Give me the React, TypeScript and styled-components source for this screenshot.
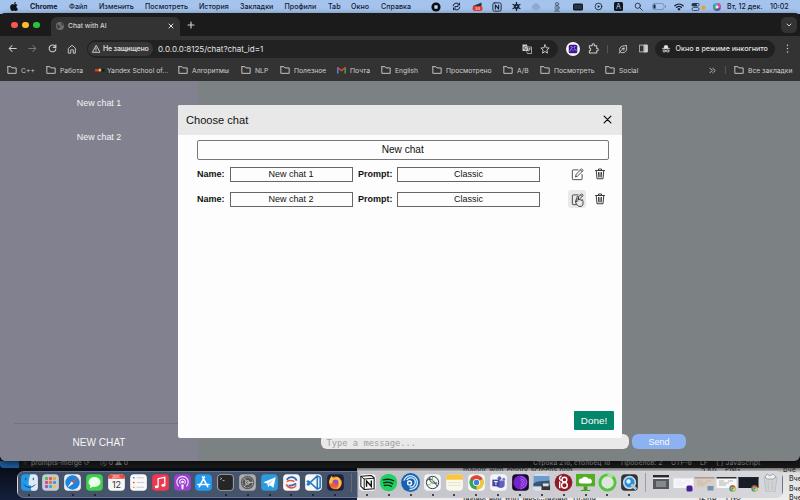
import React from 'react';
import styled, { createGlobalStyle } from 'styled-components';

const Global = createGlobalStyle`
  html, body { margin: 0; width: 800px; height: 500px; overflow: hidden; background: #10182c; }
  *, *::before, *::after { box-sizing: border-box; }
  button, input { font: inherit; padding: 0; margin: 0; }
  svg { display: block; flex: none; }
`;

/* ---------- desktop ---------- */
const Desktop = styled.div`
  position: relative;
  width: 800px;
  height: 500px;
  overflow: hidden;
  background: #10182c;
  font-family: Inter, "Liberation Sans", sans-serif;
`;
const MenuBar = styled.header`
  display: flex;
  align-items: center;
  height: 14px;
  padding: 0 10px 1px;
  background: #a4c3ed;
  color: #15202f;
  font-size: 7.1px;
`;
const Slot = styled.span<{ $w: number; $bold?: boolean }>`
  flex: none;
  width: ${p => p.$w}px;
  white-space: nowrap;
  font-weight: ${p => (p.$bold ? 700 : 500)};
`;
const IconSlot = styled.span<{ $w: number }>`
  flex: none;
  display: flex;
  justify-content: center;
  width: ${p => p.$w}px;
`;

/* ---------- browser chrome ---------- */
const Browser = styled.main`
  position: relative;
  z-index: 2;
  height: 448px;
  margin-top: -1px;
  display: flex;
  flex-direction: column;
  overflow: hidden;
  border-radius: 5px 5px 6px 6px;
  background: #1b1b1b;
  color: #d6d6d6;
  box-shadow: 0 2px 6px rgba(0, 0, 0, 0.6);
`;
const TabStrip = styled.div`
  display: flex;
  align-items: flex-end;
  height: 23px;
  padding: 0 3px 0 11px;
`;
const Lights = styled.div`
  display: flex;
  gap: 4.4px;
  width: 40px;
  height: 14.5px;
`;
const Light = styled.i<{ $c: string }>`
  width: 6.8px;
  height: 6.8px;
  border-radius: 50%;
  background: ${p => p.$c};
`;
const Tab = styled.div`
  display: flex;
  align-items: center;
  width: 129px;
  height: 19px;
  padding: 0 6px 2px 5px;
  border-radius: 6px 6px 0 0;
  background: #333;
  font-size: 6.7px;
  font-weight: 500;
`;
const TabTitle = styled.span`
  flex: 1;
  padding-left: 4px;
  white-space: nowrap;
`;
const PlusWrap = styled.div`
  padding: 0 0 7.5px 7px;
`;
const TabSearch = styled.button`
  display: flex;
  align-items: center;
  justify-content: center;
  width: 16px;
  height: 16px;
  margin: 0 0 3px auto;
  border: 0;
  border-radius: 5px;
  background: #333;
`;
const Toolbar = styled.div`
  display: flex;
  align-items: center;
  height: 25px;
  padding-left: 2px;
  background: #333;
`;
const Omnibox = styled.div`
  display: flex;
  align-items: center;
  width: 471px;
  height: 18px;
  margin-left: 5px;
  padding: 0 4px 0 1px;
  border-radius: 9px;
  background: #222;
`;
const Chip = styled.span`
  display: flex;
  align-items: center;
  gap: 3px;
  width: 65px;
  height: 14px;
  padding-left: 4px;
  border-radius: 7px;
  background: #363636;
  font-size: 7px;
  font-weight: 600;
  letter-spacing: -0.2px;
  white-space: nowrap;
`;
const Url = styled.span`
  flex: 1;
  padding-left: 5px;
  font-size: 8px;
  color: #e2e2e2;
`;
const Incognito = styled.div`
  display: flex;
  align-items: center;
  gap: 5.5px;
  width: 120px;
  height: 18px;
  margin-left: 2px;
  padding-left: 7px;
  border-radius: 9px;
  background: #212121;
  font-size: 7.15px;
  font-weight: 500;
  white-space: nowrap;
  color: #e0e0e0;
`;
const Divider = styled.i<{ $m: string }>`
  width: 1px;
  height: 8px;
  margin: ${p => p.$m};
  background: #555;
`;
const Bookmarks = styled.div`
  display: flex;
  align-items: center;
  height: 20px;
  padding: 0 0 2px 7px;
  background: #333;
  font-size: 6.75px;
  color: #cdcdcd;
`;
const Bookmark = styled.div<{ $w: number; $gap?: number }>`
  display: flex;
  align-items: center;
  gap: ${p => p.$gap ?? 4}px;
  flex: none;
  width: ${p => p.$w}px;
  white-space: nowrap;
`;

/* ---------- chat page ---------- */
const Page = styled.section`
  position: relative;
  display: flex;
  flex: 1;
  background: #7c8183;
  font-family: "Liberation Sans", Arial, sans-serif;
`;
const Sidebar = styled.aside`
  display: flex;
  flex-direction: column;
  align-items: center;
  width: 198px;
  padding-top: 5px;
  background: #81818f;
  color: #f4f4f6;
  font-size: 8.9px;
`;
const ChatLink = styled.div`
  height: 34px;
  line-height: 34px;
`;
const NewChatLink = styled.div`
  width: 170px;
  height: 38px;
  margin-top: auto;
  border-top: 1px solid #74747f;
  font-size: 10.1px;
  line-height: 37px;
  text-align: center;
`;
const ChatMain = styled.div`
  display: flex;
  flex: 1;
  align-items: flex-end;
  gap: 3px;
  padding: 0 0 12px 123px;
`;
const Message = styled.div`
  width: 308px;
  height: 15px;
  padding-left: 5.5px;
  border-radius: 6px;
  background: #e9e9e9;
  color: #a0a0a0;
  font: 8.75px/18px "DejaVu Sans Mono", monospace;
`;
const Send = styled.button`
  width: 54px;
  height: 15px;
  border: 0;
  border-radius: 6px;
  background: #8cb2f1;
  color: #f6f9ff;
  font-size: 9.1px;
`;
const Modal = styled.div`
  position: absolute;
  left: 178px;
  top: 23.5px;
  width: 444px;
  height: 333px;
  display: flex;
  flex-direction: column;
  overflow: hidden;
  border-radius: 2px;
  background: #fdfdfd;
  color: #111;
`;
const ModalHead = styled.div`
  display: flex;
  align-items: center;
  justify-content: space-between;
  height: 30px;
  padding: 0 10.5px 0 8px;
  background: #e8e8e8;
  font-size: 11.1px;
`;
const ModalBody = styled.div`
  display: flex;
  flex: 1;
  flex-direction: column;
  padding: 5.5px 8px 8px 19px;
`;
const NewChat = styled.button`
  width: 411.5px;
  height: 19.5px;
  margin-bottom: 2.5px;
  border: 1px solid #777;
  border-radius: 2px;
  background: #fdfdfd;
  color: #111;
  font-size: 10.1px;
  line-height: 17px;
`;
const ChatRow = styled.div`
  display: flex;
  align-items: center;
  height: 25px;
  font-size: 9px;
`;
const Label = styled.b<{ $w: number }>`
  width: ${p => p.$w}px;
  line-height: 13px;
`;
const Field = styled.div<{ $w: number; $mr: number }>`
  width: ${p => p.$w}px;
  height: 15px;
  margin-right: ${p => p.$mr}px;
  border: 1px solid #666;
  line-height: 13px;
  text-align: center;
`;
const Action = styled.button<{ $hover?: boolean }>`
  display: flex;
  align-items: center;
  justify-content: center;
  width: 18px;
  height: 18px;
  margin: 0 5px 1px 0;
  border: 0;
  border-radius: 3px;
  background: ${p => (p.$hover ? '#e9e9e9' : 'transparent')};
`;
const Done = styled.button`
  align-self: flex-end;
  width: 40px;
  height: 18.5px;
  margin-top: auto;
  border: 0;
  border-radius: 1px;
  background: #04866a;
  color: #fff;
  font-size: 9.9px;
`;

/* ---------- windows behind and dock ---------- */
const StatusBar = styled.div`
  display: flex;
  position: relative;
  z-index: 1;
  height: 7px;
  overflow: hidden;
  background: #191919;
  color: #8a8a8a;
  font-size: 6.8px;
  line-height: 3px;
`;
const Remote = styled.i`
  width: 19px;
  height: 7px;
  margin-right: 4px;
  border-radius: 0 0 0 4px;
  background: #1d5c9d;
`;
const Backdrop = styled.div`
  display: flex;
  height: 32px;
  background: linear-gradient(#080d19, #14203c);
`;
const Finder = styled.div`
  display: flex;
  flex-direction: column;
  justify-content: space-between;
  width: 443px;
  height: 32px;
  margin-left: 357px;
  overflow: hidden;
  background: linear-gradient(#777, #dedede 5px, #ededed);
  color: #333;
  font-size: 7px;
  line-height: 4px;
`;
const FinderRow = styled.div<{ $pl: number }>`
  display: flex;
  height: 4px;
  padding-left: ${p => p.$pl}px;
  white-space: nowrap;
`;
const Dock = styled.nav`
  position: absolute;
  z-index: 3;
  left: 17px;
  top: 470.5px;
  width: 766px;
  height: 27px;
  display: flex;
  padding: 1.7px 0 0 0.2px;
  border: 1px solid rgba(215, 220, 235, 0.25);
  border-radius: 7px;
  background: linear-gradient(90deg, #46546b 0 339px, #c2c3c9 340px, #d8d8dc);
`;
const DockItem = styled.div<{ $run?: boolean }>`
  display: flex;
  flex: none;
  flex-direction: column;
  align-items: center;
  width: 21.87px;
  &::after {
    content: '';
    display: ${p => (p.$run ? 'block' : 'none')};
    width: 2px;
    height: 2px;
    margin-top: 1.8px;
    border-radius: 50%;
    background: #17191e;
  }
`;
const DockDivider = styled.i`
  width: 1px;
  height: 19px;
  margin: 0 4.5px;
  background: rgba(120, 125, 135, 0.6);
`;

type IconProps = { s?: number; c?: string; children: React.ReactNode };
const Line = ({ s = 10, c = '#cfcfcf', children }: IconProps) => (
  <svg width={s} height={s} viewBox="0 0 24 24" fill="none" stroke={c} strokeWidth="2.2" strokeLinejoin="round" strokeLinecap="round">
    {children}
  </svg>
);
const Folder = () => (
  <Line><path d="M2 5v15h20V7H12L9.500 4H2z" /></Line>
);
const Tile = ({ bg, children }: { bg: string; children?: React.ReactNode }) => (
  <svg width="19" height="19" viewBox="0 0 20 20">
    <rect x="1.2" y="1.2" width="17.6" height="17.6" rx="4" fill={bg} />
    {children}
  </svg>
);

const Pencil = () => (
  <Line s={13} c="#333"><path d="M13 3.500H4A1.500 1.500 0 0 0 2.500 5v15A1.500 1.500 0 0 0 4 21.500h15a1.500 1.500 0 0 0 1.500-1.500v-8" strokeWidth="1.600" /><path d="M8.500 16l1-4.500L19.500 1.500l3 3-10 10zM17.500 3.500l3 3" strokeWidth="1.600" /></Line>
);
const Trash = () => (
  <Line s={12} c="#333"><path d="M3 5h18M9 5V2h6v3M4.500 5.500L6 21.500h12l1.500-16M9 9l.5 9M12 9v9M15 9l-.5 9" strokeWidth="1.900" /></Line>
);
const Hand = styled.svg`
  position: absolute;
  left: 573.5px;
  top: 114px;
`;

const dockLeft: [React.ReactNode, boolean][] = [
  [<Tile bg="#2499ec"><path d="M11 1.200h4c2.500 0 3.800 1.500 3.800 4v10c0 2.500-1.500 3.600-3.800 3.600h-3c-.6-2-.7-4-.7-6H9c0-5 .8-8.500 2-11.600z" fill="#dfeaf4" /><path d="M6 5v2.500M14 5v2.500M4 12c3 4 9 4 12 0" stroke="#183b66" fill="none" /></Tile>, true],
  [<Tile bg="#c6cbd3">{['#52bd52', '#e65c50', '#eda338', '#e04878', '#ed713b', '#4c93ed', '#9b58cc', '#38b3ce', '#ebc64d'].map((c, i) => <rect key={i} x={4.2 + (i % 3) * 4.2} y={4.2 + Math.floor(i / 3) * 4.2} width="3.300" height="3.300" rx=".8" fill={c} />)}</Tile>, false],
  [<Tile bg="#e9edf1"><circle cx="10" cy="10" r="7.600" fill="#1c85e0" /><path d="M15.500 4.500L11 11 9 9z" fill="#f04e42" /><path d="M4.500 15.500L11 11 9 9z" fill="#fff" /></Tile>, true],
  [<Tile bg="#3fce4e"><ellipse cx="10" cy="9.500" rx="6.300" ry="5.300" fill="#e8ffe9" /><path d="M6 12l-1 4 4-2z" fill="#e8ffe9" /></Tile>, true],
  [<Tile bg="#f7f7f7"><path d="M1.200 6V5c0-2.500 1.300-3.800 4-3.800h9.600c2.700 0 4 1.300 4 3.800v1z" fill="#e8483e" /><text x="10" y="5.200" textAnchor="middle" fontSize="3.800" fill="#fff">ДЕК.</text><text x="10" y="15.300" textAnchor="middle" fontSize="9.500" fill="#333">12</text></Tile>, false],
  [<Tile bg="#f8f8f8"><g strokeWidth="1.800" strokeLinecap="round"><path d="M5 5h.1" stroke="#3b82e8" /><path d="M5 10h.1" stroke="#e64d3e" /><path d="M5 15h.1" stroke="#f09d2e" /></g><path d="M8 5h8M8 10h8M8 15h8" stroke="#c9c9c9" /></Tile>, false],
  [<Tile bg="#ed3850"><path d="M7.500 14.500V6l7-1.500v8.500" stroke="#fff" strokeWidth="1.400" fill="none" /><ellipse cx="6" cy="14.500" rx="2" ry="1.600" fill="#fff" /><ellipse cx="13" cy="13" rx="2" ry="1.600" fill="#fff" /></Tile>, false],
  [<Tile bg="#9a41ce"><g fill="none" stroke="#f5e3ff" strokeWidth="1.200"><path d="M6 14a6 6 0 1 1 8 0M8 11.500a3 3 0 1 1 4 0" /></g><circle cx="10" cy="9.500" r="1.400" fill="#fff" /><path d="M8.700 12h2.600l-.5 5H9.200z" fill="#fff" /></Tile>, false],
  [<Tile bg="#239aef"><path d="M11 4L5.500 14.500M9 4l5.500 10.500M4 12h12" stroke="#fff" strokeWidth="1.600" strokeLinecap="round" /></Tile>, false],
  [<Tile bg="#a8a8a8"><rect x="2.200" y="2.200" width="15.600" height="15.600" rx="3" fill="#262626" /><path d="M4.500 5l1.500 1-1.500 1M7 8h2" stroke="#ddd" strokeWidth=".8" fill="none" /></Tile>, true],
  [<Tile bg="#aaacaf"><circle cx="10" cy="10" r="7" fill="#555" /><circle cx="10" cy="10" r="5.500" fill="none" stroke="#bbb" strokeWidth="1" strokeDasharray="1 .7" /><circle cx="10" cy="10" r="2" fill="none" stroke="#ccc" /><path d="M10 10L6 5M10 10h6M10 10l-4 5" stroke="#bbb" /></Tile>, true],
  [<Tile bg="#2b9ade"><path d="M3.500 9.800L16.500 4.500l-2.300 11-4-2.700-1.700 2.200-.8-3.800z" fill="#fff" /><path d="M8 11l6-4.500-4.200 6" fill="#b3dcf3" /></Tile>, true],
  [<Tile bg="#f6f6f7"><path d="M15.500 8A6 6 0 0 0 5 7M7 13c4 1 6-1 8-2" fill="none" stroke="#2d65ba" strokeWidth="1.900" /><path d="M4.500 12A6 6 0 0 0 15 13M5 9c3-2 6-1 8 0" fill="none" stroke="#e4573e" strokeWidth="1.700" /></Tile>, true],
  [<Tile bg="#f7f7f8"><path d="M14 3L6.500 10 4.500 8.500 3.500 9l1.500 1.500M14 17L6.500 10M5 10.500L3.500 12l1 .6 2-1.600M14 3v14l3-1.500v-11z" stroke="#2379c2" strokeWidth="1.700" fill="none" strokeLinejoin="round" /></Tile>, true],
  [<Tile bg="#21203c"><circle cx="10" cy="10.500" r="6.700" fill="#f77b2d" /><path d="M3.500 11C3 7 5 5 6 3l2 3 4-2 3 3c2 3 1 8-4 10 3-3 3-6 0-7-3 0-4 1-7.500 1z" fill="#ffc13b" /><circle cx="10" cy="10" r="3.200" fill="#9452c0" /><path d="M4 11c2 1 3 1 5-2 0 3 2 4 4 3-1 5-8 4-9-1z" fill="#f05b38" /></Tile>, true],
];

const dockRight: React.ReactNode[] = [
  <Tile bg="#fafafa"><path d="M3 3.500l11-.8 3 2.300v11.500l-10.500.8L3 14z" fill="#fff" stroke="#111" strokeWidth="1.100" /><path d="M3 3.500l3.500 2.800v11M6.500 6.300L17 5.500" stroke="#111" strokeWidth="1" fill="none" /><path d="M9 14.500V8.500l5 5.500V8" stroke="#111" strokeWidth="1.500" fill="none" /></Tile>,
  <svg width="19" height="19" viewBox="0 0 20 20"><circle cx="10" cy="10" r="9.200" fill="#1fd160" /><path d="M4.500 7.200c4-1 8-.6 11 1M5 10.300c3.500-.9 6.700-.5 9.300.9M5.600 13.100c2.800-.6 5.300-.3 7.500.9" stroke="#112618" strokeWidth="1.500" strokeLinecap="round" fill="none" /></svg>,
  <svg width="19" height="19" viewBox="0 0 20 20"><circle cx="10" cy="10" r="9.900" fill="#1762b0" /><path d="M3 8A7.300 7.300 0 1 1 9 17.300M6 7.500a4.800 4.800 0 1 1 3 7" stroke="#cbe6fa" strokeWidth="1.500" fill="none" /><circle cx="9" cy="10.500" r="2" fill="none" stroke="#fff" strokeWidth="1.500" /></svg>,
  <Tile bg="#f4f5f5"><g fill="none" stroke="#27394a" strokeWidth="1"><circle cx="10" cy="10" r="6.500" /><path d="M4 8c5-4 7 0 11 6M7 4.500c0 5 2 7 8 6" /><path d="M4 12c4 2 6-2 6-8" stroke="#7cb454" /></g></Tile>,
  <Tile bg="#fbf7e9"><path d="M1.200 7V5c0-2.500 1.500-3.800 4-3.800h9.600c2.500 0 4 1.300 4 3.800v2z" fill="#f6c644" /><path d="M3 10h14M3 13h14" stroke="#ddd8c8" strokeWidth=".7" /></Tile>,
  <Tile bg="#f7f7f7"><circle cx="10" cy="10" r="7.500" fill="#38a453" /><path d="M10 10L3.500 6.200A7.500 7.500 0 0 1 16.500 6.200z" fill="#e24635" /><path d="M10 10l6.500-3.800A7.500 7.500 0 0 1 10 17.500z" fill="#f5c735" /><circle cx="10" cy="10" r="3.700" fill="#fff" /><circle cx="10" cy="10" r="2.800" fill="#3781e8" /></Tile>,
  <Tile bg="#f5f5f9"><circle cx="11" cy="5.500" r="2" fill="#6264b5" /><circle cx="15.500" cy="6.500" r="1.400" fill="#7779c4" /><path d="M8 8h8.500v5c0 3-6 4-8.500 1z" fill="#6163bb" /><rect x="3.500" y="7" width="7.500" height="7" fill="#4548a2" /><path d="M5.300 9h4M7.300 9v3.500" stroke="#fff" /></Tile>,
  <Tile bg="#180b27"><circle cx="10" cy="10" r="7.500" fill="#7423c9" /><g fill="none" stroke="#c07af8" strokeWidth=".8"><path d="M10 3.800a6.200 6.200 0 0 1 0 12.400M10 6a4 4 0 0 1 0 8M10 8a2 2 0 0 1 0 4" /></g></Tile>,
  <Tile bg="#dbe4ec"><rect x="1.500" y="3" width="17" height="11" fill="#6f9cd0" /><path d="M1.500 11c5-3 9-2 17-3v6h-17z" fill="#39556f" /><path d="M10 13h9v5h-9z" fill="#343437" /><path d="M11.500 11h6v3h-6z" fill="#ddd" /></Tile>,
  <svg width="19" height="19" viewBox="0 0 20 20"><circle cx="10" cy="10" r="9.300" fill="#921923" /><g fill="none" stroke="#fff" strokeWidth="1.500"><circle cx="11" cy="7" r="2.500" /><circle cx="11" cy="13" r="3" /><path d="M8 3c-3 1-3 4 0 5M6 9v7" /></g></svg>,
  <svg width="19" height="19" viewBox="0 0 20 20"><path d="M0 1h20v13H0z" fill="#52ad25" /><path d="M8 14h4v4h3v1H5v-1h3z" fill="#479b20" /><path d="M5 11a2.500 2.500 0 0 1 1-5 4 4 0 0 1 7 0 2.500 2.500 0 0 1 2 5z" fill="#fff" /></svg>,
  <svg width="19" height="19" viewBox="0 0 20 20"><circle cx="10" cy="10" r="8" fill="#dfe5dd" stroke="#54c63d" strokeWidth="3" /><path d="M10 2a8 8 0 0 1 5.500 2.200" stroke="#a2e690" strokeWidth="3" fill="none" /></svg>,
  <Tile bg="#2e343c"><circle cx="10" cy="10" r="7" fill="#cbd5dc" /><circle cx="10" cy="10" r="5.200" fill="#238fdd" /><circle cx="9" cy="9" r="2.300" fill="#dff5fd" /><path d="M12 12l5 5" stroke="#b8c8d1" strokeWidth="3" /></Tile>,
];

const Thumb = ({ bg, bar, children }: { bg: string; bar: string; children?: React.ReactNode }) => (
  <svg width="21" height="19" viewBox="0 0 21 19">
    <rect x=".5" y="4" width="20" height="11" fill={bg} /><rect x=".5" y="4" width="20" height="1.500" fill={bar} />
    <path d="M3 8h5M3 10h10M12 8h5M3 12h7" stroke={bar} strokeWidth=".6" opacity=".6" />
    {children}
  </svg>
);
const ChromeBadge = () => (
  <g><circle cx="16.500" cy="15.500" r="3.200" fill="#3aa655" /><path d="M16.500 15.500l-2.800-1.600a3.200 3.200 0 0 1 5.600 0z" fill="#e24635" /><path d="M16.500 15.500l2.800-1.600a3.200 3.200 0 0 1-2.800 4.800z" fill="#f5c735" /><circle cx="16.500" cy="15.500" r="1.300" fill="#3781e8" stroke="#fff" strokeWidth=".4" /></g>
);
const dockWindows: React.ReactNode[] = [
  <svg width="16" height="19" viewBox="0 0 16 19"><path d="M0 2h16v14H0z" fill="#55585c" /><path d="M0 2h16v2.500H0z" fill="#292a2c" /><path d="M0 4.500h16v1.500H0z" fill="#f2f2f2" /><path d="M3 8h10v6H3z" fill="#85898d" /></svg>,
  <Thumb bg="#f7f7fb" bar="#d5d6df"><rect x="13.500" y="12.500" width="6" height="6" rx="1.500" fill="#4b1c96" /></Thumb>,
  <Thumb bg="#d9cec0" bar="#ad9991"><rect x="13.500" y="13" width="6" height="4.500" fill="#6e90b8" /></Thumb>,
  <Thumb bg="#f8f8f8" bar="#333"><ChromeBadge /></Thumb>,
  <Thumb bg="#171b26" bar="#1d2533"><ChromeBadge /></Thumb>,
  <svg width="15" height="19" viewBox="0 0 15 19"><path d="M1 4h13l-2 15H3z" fill="#d0d3d6" stroke="#b1b5ba" strokeWidth=".7" /><path d="M2 4l2-3 3 2 3-2 3 3-3 2H4z" fill="#f0f1f2" stroke="#878b91" strokeWidth=".7" /><path d="M5 8l.5 9M9.500 8L9 17" stroke="#b7bbc0" strokeWidth=".6" /></svg>,
];

const menus: [string, number][] = [
  ['Файл', 30], ['Изменить', 46], ['Посмотреть', 54], ['История', 41], ['Закладки', 44.5],
  ['Профили', 43.5], ['Tab', 23], ['Окно', 30], ['Справка', 44],
];
const trayColor = '#182333';
const tray: [number, React.ReactNode][] = [
  [21, <Line s={10} c="#0b0f14"><circle cx="12" cy="12" r="11" fill="#0b0f14" stroke="none" /><rect x="8" y="8" width="8" height="8" rx="1" fill="#c0d4ef" stroke="none" /></Line>],
  [21, <Line s={9} c={trayColor}><path d="M3 10a9 9 0 0 1 17-2M21 14a9 9 0 0 1-17 2M8 12h8M20 3v5h-5M4 21v-5h5" strokeWidth="2.600" /></Line>],
  [20, <svg width="11" height="9" viewBox="0 0 22 18"><path d="M2 8L19 1v14L2 12z" fill="#26344a" /><rect x="1" y="8" width="20" height="10" rx="5" fill="#e53835" /><text x="11" y="16" fontSize="8" fill="#fff" textAnchor="middle">34</text></svg>],
  [19, <Line s={10} c={trayColor}><rect x="2" y="2" width="20" height="20" rx="4" /><path d="M8 17V7l8 10V7" strokeWidth="2.600" /></Line>],
  [20, <Line s={9} c={trayColor}><path d="M12 1v22M3 6.500l18 11M21 6.500L3 17.500" strokeWidth="3.500" /><circle cx="12" cy="12" r="6" fill={trayColor} /><circle cx="12" cy="12" r="2" fill="#a4c3ed" stroke="none" /></Line>],
  [20, <Line s={8} c="#7188a8"><path d="M4 19a10 10 0 1 1 16 0M8 16a5 5 0 1 1 8 0M12 12v9" /></Line>],
  [21, <Line s={10} c="#50627b"><circle cx="12" cy="5" r="4" /><circle cx="12" cy="14" r="5" /><path d="M6 22h12M12 5v15" /></Line>],
  [21, <svg width="10" height="8" viewBox="0 0 20 16"><rect y="1" width="20" height="14" rx="3" fill="#111923" /><path d="M4 4v8M8 4v8M12 4v8M16 4v8" stroke="#5d708c" strokeWidth="1.300" /></svg>],
  [20, <Line s={9} c={trayColor}><circle cx="12" cy="12" r="9" /><path d="M10 8l6 4-6 4z" fill={trayColor} stroke="none" /></Line>],
  [20, <svg width="9" height="9" viewBox="0 0 18 18"><rect width="18" height="18" rx="3" fill="#111820" /><text x="9" y="14" fontSize="14" fill="#c0d4ef" textAnchor="middle">A</text></svg>],
  [20, <Line s={9} c={trayColor}><circle cx="10" cy="10" r="7" /><path d="M15 15l7 7" /></Line>],
  [21, <svg width="14" height="7" viewBox="0 0 28 14"><rect x="1" y="1" width="23" height="12" rx="4" fill="none" stroke="#6d83a3" strokeWidth="1.500" /><rect x="3" y="3" width="4" height="8" rx="1" fill="#142133" /><path d="M27 5v4" stroke="#6d83a3" strokeWidth="2" /></svg>],
  [20, <Line s={10} c={trayColor}><path d="M2 9a15 15 0 0 1 20 0M6 13a9 9 0 0 1 12 0M10 17a3 3 0 0 1 4 0l-2 2z" strokeWidth="3" /></Line>],
  [18, <svg width="15" height="8" viewBox="0 0 30 16"><rect x="1" y="0" width="16" height="7" rx="3.500" fill="#26364c" /><circle cx="13.500" cy="3.500" r="2" fill="#c0d4ef" /><rect x="2" y="9" width="14" height="6" rx="3" fill="none" stroke="#26364c" strokeWidth="1.500" /><circle cx="25" cy="9" r="4" fill="#f59a23" /></svg>],
  [20, <svg width="8" height="8" viewBox="0 0 16 16"><circle cx="8" cy="8" r="8" fill="#5c54b6" /><path d="M8 8L1 4a8 8 0 0 1 9-4z" fill="#3fb6db" /><path d="M8 8l2-8a8 8 0 0 1 5 11z" fill="#e45375" /><path d="M8 8l-4 7a8 8 0 0 1-3-10z" fill="#39ae76" /><circle cx="8" cy="8" r="3" fill="#f3eafa" /></svg>],
];

const Yandex = () => <svg width="10" height="8" viewBox="0 0 20 16"><path d="M0 6h9v5H0z" fill="#d63b2f" /><circle cx="10" cy="8" r="3" fill="#f7c23b" /><path d="M13 6h6v5h-6z" fill="#181818" /></svg>;
const Gmail = () => <svg width="9" height="8" viewBox="0 0 18 14"><path d="M1.500 14V2" stroke="#4285f4" strokeWidth="3" /><path d="M16.500 14V2" stroke="#34a853" strokeWidth="3" /><path d="M1 2l8 6 8-6" stroke="#ea4335" strokeWidth="3" fill="none" /></svg>;

const bookmarks: [string, number, React.ReactNode?, number?][] = [
  ['C++', 39], ['Работа', 49], ['Yandex School of...', 83, <Yandex />, 2], ['Алгоритмы', 63], ['NLP', 39],
  ['Полезное', 57], ['Почта', 44, <Gmail />], ['English', 51], ['Просмотрено', 71], ['A/B', 37],
  ['Посмотреть', 65], ['Social', 104],
];

const DockGroup = ({ items }: { items: [React.ReactNode, boolean][] }) => (
  <>{items.map(([icon, run], i) => <DockItem key={i} $run={run}>{icon}</DockItem>)}</>
);

export default function App() {
  return (
    <Desktop>
      <Global />
      <MenuBar>
        <Slot $w={20}>
          <svg width="8" height="9" viewBox="0 0 16 18"><path d="M8 5c2-2 5-1 7 1-3 2-3 6 1 8-1 3-3 4-5 4l-3-1-3 1C2 18-1 12 1 7c2-3 4-3 7-2zM8 4c0-2 1-4 4-4 0 2-1 4-4 4z" fill="#0c131c" /></svg>
        </Slot>
        <Slot $w={39} $bold>Chrome</Slot>
        {menus.map(([t, w]) => <Slot key={t} $w={w}>{t}</Slot>)}
        {tray.map(([w, icon], i) => <IconSlot key={i} $w={w}>{icon}</IconSlot>)}
        <Slot $w={43}>Вт, 12 дек.</Slot>
        <Slot $w={20}>10:02</Slot>
      </MenuBar>

      <Browser>
        <TabStrip>
          <Lights><Light $c="#fc5650" /><Light $c="#fdbb2d" /><Light $c="#28c440" /></Lights>
          <Tab>
            <svg width="8" height="8" viewBox="0 0 16 16"><circle cx="8" cy="8" r="8" fill="#6b6e70" /><path d="M2 5c4-1 4 3 7 3 0 3-3 2-3 6C3 13 1 9 2 5zM10 1c4 1 5 4 5 6-3 1-5-1-5-6z" fill="#3c3e40" /></svg>
            <TabTitle>Chat with AI</TabTitle>
            <Line s={6} c="#e2e2e2"><path d="M4 4l16 16M20 4L4 20" strokeWidth="4" /></Line>
          </Tab>
          <PlusWrap><Line s={8}><path d="M12 3v18M3 12h18" strokeWidth="3.500" /></Line></PlusWrap>
          <TabSearch><Line s={6}><path d="M4 8l8 8 8-8" strokeWidth="4" /></Line></TabSearch>
        </TabStrip>
        <Toolbar>
          <IconSlot $w={20}><Line s={9}><path d="M22 12H3M11 4l-8 8 8 8" strokeWidth="2.700" /></Line></IconSlot>
          <IconSlot $w={20}><Line s={9} c="#777"><path d="M2 12h19M13 4l8 8-8 8" strokeWidth="2.700" /></Line></IconSlot>
          <IconSlot $w={20}><Line s={9}><path d="M19 6a9 9 0 1 0 2 7M21 2v7h-7" strokeWidth="2.800" /></Line></IconSlot>
          <IconSlot $w={20}><Line s={10}><path d="M4 10l8-7 8 7v12h-5v-8H9v8H4z" strokeWidth="2.200" /></Line></IconSlot>
          <Omnibox>
            <Chip><Line s={8} c="#e0e0e0"><path d="M12 2L1 22h22zM12 9v6M12 18v.5" strokeWidth="2.600" /></Line>Не защищено</Chip>
            <Url>0.0.0.0:8125/chat?chat_id=1</Url>
            <IconSlot $w={18}>
              <svg width="10" height="10" viewBox="0 0 20 20"><path d="M1 1h9l3 13H1z" fill="#cfcfcf" /><path d="M11 6h8v13h-8l-2-4M12 10h6M15 8c0 4-1 6-3 7" stroke="#cfcfcf" strokeWidth="1.500" fill="none" /><path d="M9 6a3 3 0 1 0 0 4H7" stroke="#333" strokeWidth="1.500" fill="none" /></svg>
            </IconSlot>
            <IconSlot $w={18}><Line s={10}><path d="M12 2l3 7 7 .6-5.500 4.700L18 22l-6-4-6 4 1.500-7.700L2 9.600 9 9z" strokeWidth="2.200" /></Line></IconSlot>
          </Omnibox>
          <IconSlot $w={30}>
            <svg width="14" height="14" viewBox="0 0 28 28"><circle cx="14" cy="14" r="14" fill="#f7f4fb" /><rect x="5.500" y="5.500" width="17" height="17" rx="3" fill="#3f1889" /><path d="M8 19v-4h3v-4h6v4h3v4M9 9h3M16 9h3M14 15v4" stroke="#8f6cf0" strokeWidth="2" fill="none" strokeDasharray="3 1" /></svg>
          </IconSlot>
          <IconSlot $w={10}><Line s={11}><path d="M3 6h6V4a2.500 2.500 0 0 1 5 0v2h5v6h1a2 2 0 0 1 0 5h-1v5H3v-5a3 3 0 0 0 0-6z" strokeWidth="2.200" /></Line></IconSlot>
          <Divider $m="0 5px 0 9px" />
          <IconSlot $w={20}><Line s={10}><path d="M20 4c2 8 1 16-8 17-8 0-10-6-7-12C8 5 14 4 20 4zM3 22c3-7 7-9 12-12l-5 .500M15 10l-1 5" strokeWidth="2.200" /></Line></IconSlot>
          <IconSlot $w={20}><Line s={9}><path d="M2 3h20v18H2z" /><path d="M14 3h8v18h-8z" fill="#cfcfcf" /></Line></IconSlot>
          <Incognito>
            <Line s={8} c="#e8e8e8"><path d="M6 9l2-7h8l2 7z" fill="#e8e8e8" /><path d="M1 11h22M10 18c2-1 2-1 4 0" /><circle cx="6.500" cy="18" r="3.500" /><circle cx="17.500" cy="18" r="3.500" /></Line>
            Окно в режиме инкогнито
          </Incognito>
          <IconSlot $w={24}><Line s={9}><path d="M12 3v.1M12 12v.1M12 21v.1" strokeWidth="4" /></Line></IconSlot>
        </Toolbar>
        <Bookmarks>
          {bookmarks.map(([t, w, icon, gap]) => <Bookmark key={t} $w={w} $gap={gap}>{icon ?? <Folder />}{t}</Bookmark>)}
          <Line s={7}><path d="M3 4l8 8-8 8M13 4l8 8-8 8" strokeWidth="3" /></Line>
          <Divider $m="0 8px 0 9px" />
          <Bookmark $w={62}><Folder />Все закладки</Bookmark>
        </Bookmarks>

        <Page>
          <Sidebar>
            <ChatLink>New chat 1</ChatLink>
            <ChatLink>New chat 2</ChatLink>
            <NewChatLink>NEW CHAT</NewChatLink>
          </Sidebar>
          <ChatMain>
            <Message>Type a message...</Message>
            <Send>Send</Send>
          </ChatMain>
          <Modal>
            <ModalHead>
              Choose chat
              <Line s={9} c="#111"><path d="M3 3l18 18M21 3L3 21" strokeWidth="3.300" /></Line>
            </ModalHead>
            <ModalBody>
              <NewChat>New chat</NewChat>
              {[1, 2].map(n => (
                <ChatRow key={n}>
                  <Label $w={32.5}>Name:</Label>
                  <Field $w={123} $mr={5.5}>New chat {n}</Field>
                  <Label $w={39}>Prompt:</Label>
                  <Field $w={143} $mr={28}>Classic</Field>
                  <Action $hover={n === 2}><Pencil /></Action>
                  <Action><Trash /></Action>
                </ChatRow>
              ))}
              <Done>Done!</Done>
            </ModalBody>
          </Modal>
          <Hand width="10" height="12" viewBox="0 0 20 24">
            <path d="M6 14V4c0-2 3-2 3 0v6c1-1 3-1 3 0 1-1 3 0 3 1 2-1 3 0 3 2v4c0 4-2 6-6 6-4 0-6-3-9-8-1-2 1-3 3-1z" fill="#e9e9e9" stroke="#333" strokeWidth="1.800" />
          </Hand>
        </Page>
      </Browser>

      <StatusBar>
        <Remote />
        <Slot $w={8}>⑂</Slot><Slot $w={69}>prompts-merge ⟳</Slot><Slot $w={433}>ⓧ 0 ⚠ 0</Slot>
        <Slot $w={88}>Строка 218, столбец 18</Slot><Slot $w={50}>Пробелов: 2</Slot>
        <Slot $w={29}>UTF-8</Slot><Slot $w={16}>LF</Slot><Slot $w={50}>{'{ } JavaScript'}</Slot>
      </StatusBar>
      <Backdrop>
        <Finder>
          <FinderRow $pl={106}><Slot $w={238}>mainor_with_empty_screens.png</Slot><Slot $w={24}>5 КБ</Slot><Slot $w={58}>PNG</Slot><Slot $w={20}>Вче</Slot></FinderRow>
          <FinderRow $pl={432}><Slot $w={20}>Вче</Slot></FinderRow>
          <FinderRow $pl={432}><Slot $w={20}>Вче</Slot></FinderRow>
          <FinderRow $pl={106}><Slot $w={235}>fastapi_app_with_label...fastapi_ (1).png</Slot><Slot $w={28}>12 КБ</Slot><Slot $w={63}>PNG</Slot><Slot $w={20}>Вче</Slot></FinderRow>
        </Finder>
      </Backdrop>

      <Dock>
        <DockGroup items={dockLeft} />
        <DockDivider />
        <DockGroup items={dockRight.map((icon): [React.ReactNode, boolean] => [icon, true])} />
        <DockDivider />
        <DockGroup items={dockWindows.map((icon): [React.ReactNode, boolean] => [icon, false])} />
      </Dock>
    </Desktop>
  );
}
